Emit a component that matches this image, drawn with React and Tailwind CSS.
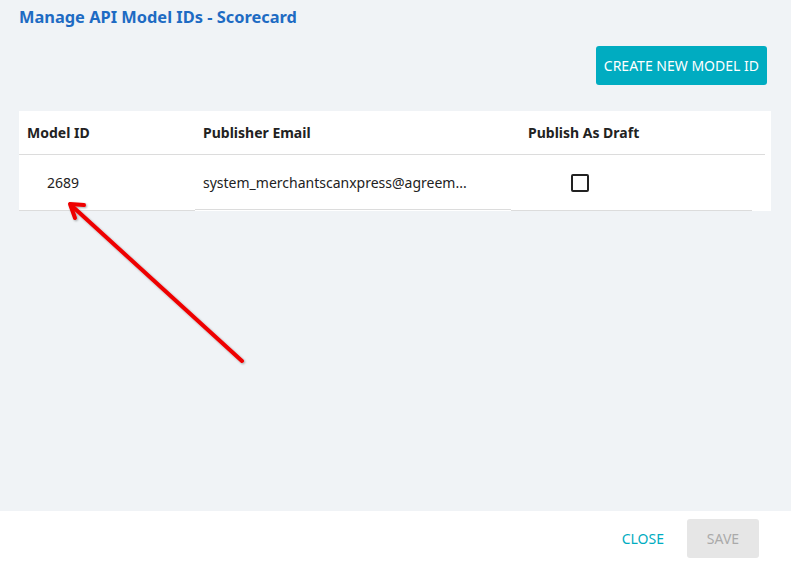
import React from 'react';

const font = { fontFamily: '"Noto Sans", "Open Sans", sans-serif' };

function Checkbox() {
  return <div className="w-[18px] h-[18px] border-2 border-[#222] rounded-[2px] bg-white" />;
}

export default function App() {
  return (
    <div className="relative w-[791px] h-[561px] flex flex-col overflow-hidden" style={font}>
      <div className="flex-1 bg-[#f0f3f6] px-[19px]">
        <h1 className="pt-[5px] text-[16.4px] leading-[24px] font-bold text-[#1e6bc3]">
          Manage API Model IDs - Scorecard
        </h1>

        {/* Actions */}
        <div className="flex justify-end mt-[17px] pr-[5px]">
          <button className="h-[39px] px-[8px] rounded-[3px] bg-[#00acc1] text-white text-[14px]">
            CREATE NEW MODEL ID
          </button>
        </div>

        {/* Table */}
        <div className="mt-[26px] bg-white w-[752px] h-[100px] text-[14px] text-[#222]">
          <div className="flex h-[44px] items-center font-bold border-b border-[#dcdcdc] w-[746px]">
            <div className="w-[176px] pl-[8px]">Model ID</div>
            <div className="w-[316px] pl-[8px]">Publisher Email</div>
            <div className="pl-[17px]">Publish As Draft</div>
          </div>
          <div className="flex h-[56px]">
            <div className="w-[176px] pl-[28px] flex items-center border-b border-[#dcdcdc]">2689</div>
            <div className="w-[316px] pl-[8px] h-[55px] flex items-center border-b border-[#dcdcdc]">
              system_merchantscanxpress@agreem...
            </div>
            <div className="w-[241px] flex items-center border-b border-[#dcdcdc]">
              <div className="ml-[60px] mt-[1px]">
                <Checkbox />
              </div>
            </div>
          </div>
        </div>
      </div>

      {/* Footer */}
      <div className="h-[50px] bg-white flex items-start justify-end pt-[8px] pr-[32px] gap-[23px]">
        <button className="h-[39px] text-[14px] text-[#00acc1]">CLOSE</button>
        <button className="w-[72px] h-[39px] rounded-[3px] bg-[#e6e6e6] text-[#aaaaaa] text-[14px]">SAVE</button>
      </div>

      {/* Annotation arrow */}
      <svg className="absolute left-0 top-0 pointer-events-none" width="791" height="561">
        <defs>
          <filter id="sh" x="-10%" y="-10%" width="120%" height="120%">
            <feDropShadow dx="1" dy="1" stdDeviation="1" floodColor="#000" floodOpacity="0.35" />
          </filter>
        </defs>
        <g filter="url(#sh)" stroke="#ee0000" strokeWidth="4" strokeLinecap="round" strokeLinejoin="round" fill="none">
          <line x1="242" y1="361" x2="72" y2="206" />
          <polyline points="75,218 70,204 84,205" />
        </g>
      </svg>
    </div>
  );
}
